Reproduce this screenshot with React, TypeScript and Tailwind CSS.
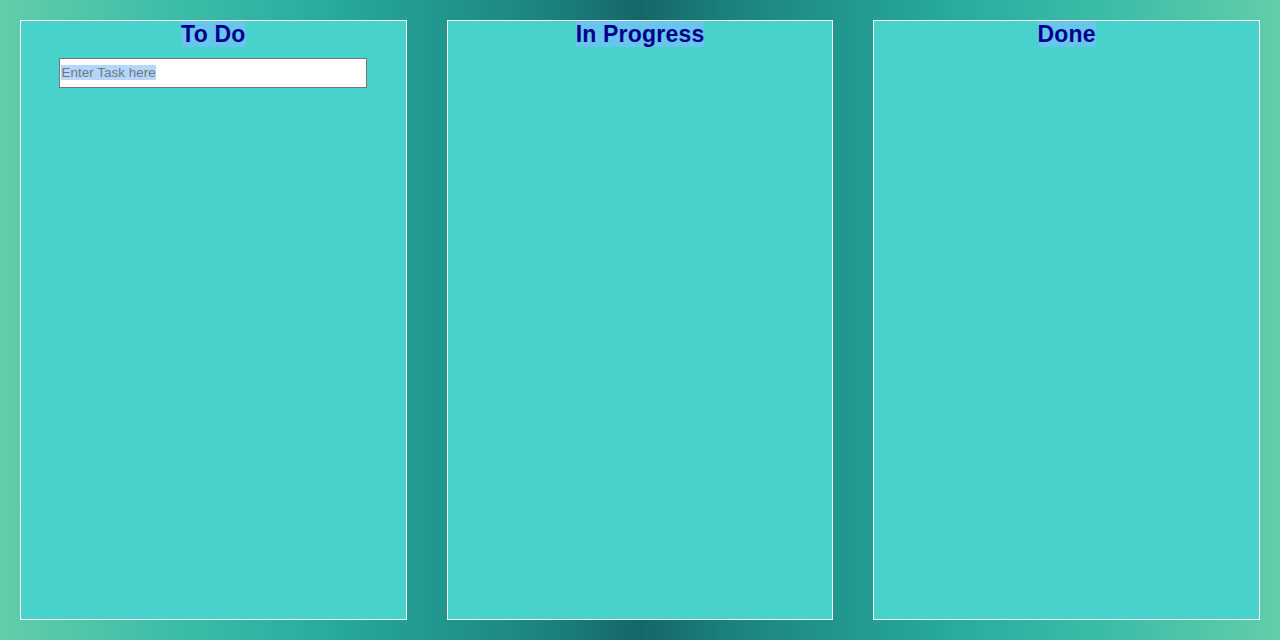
import React from "react";

function Column({ title, children }: { title: string; children?: React.ReactNode }) {
  return (
    <div className="flex-1 h-full border border-white bg-[#48d2cc] flex flex-col items-center">
      <h2 className="m-0 text-center leading-[26px]">
        <span className="bg-[#68c5eb] text-[#00008b] font-bold text-[23px] tracking-[0.2px] [font-family:'Liberation_Sans',Arial,sans-serif] inline-block leading-[26px]">
          {title}
        </span>
      </h2>
      {children}
    </div>
  );
}

export default function App() {
  return (
    <div className="w-[1280px] h-[640px] p-5 flex gap-10 bg-[linear-gradient(to_right,#63cda9_0%,#3fbfa8_12%,#2aaea0_24%,#229a90_33%,#1c8580_42%,#156767_50%,#1c8580_58%,#229a90_67%,#2aaea0_76%,#3fbfa8_88%,#63cda9_100%)]">
      <Column title="To Do">
        <div className="relative w-4/5 mt-[9px]">
          <input
            type="text"
            aria-label="Enter Task here"
            className="block w-full h-[30px] border border-[#767676] bg-white px-[1px] text-[13.5px] [font-family:'Liberation_Sans',Arial,sans-serif] outline-none"
          />
          <span className="pointer-events-none absolute left-[2px] top-[7px] bg-[#b3d7ff] text-[#757575] text-[13.5px] leading-[15px] [font-family:'Liberation_Sans',Arial,sans-serif]">
            Enter Task here
          </span>
        </div>
      </Column>
      <Column title="In Progress" />
      <Column title="Done" />
    </div>
  );
}
